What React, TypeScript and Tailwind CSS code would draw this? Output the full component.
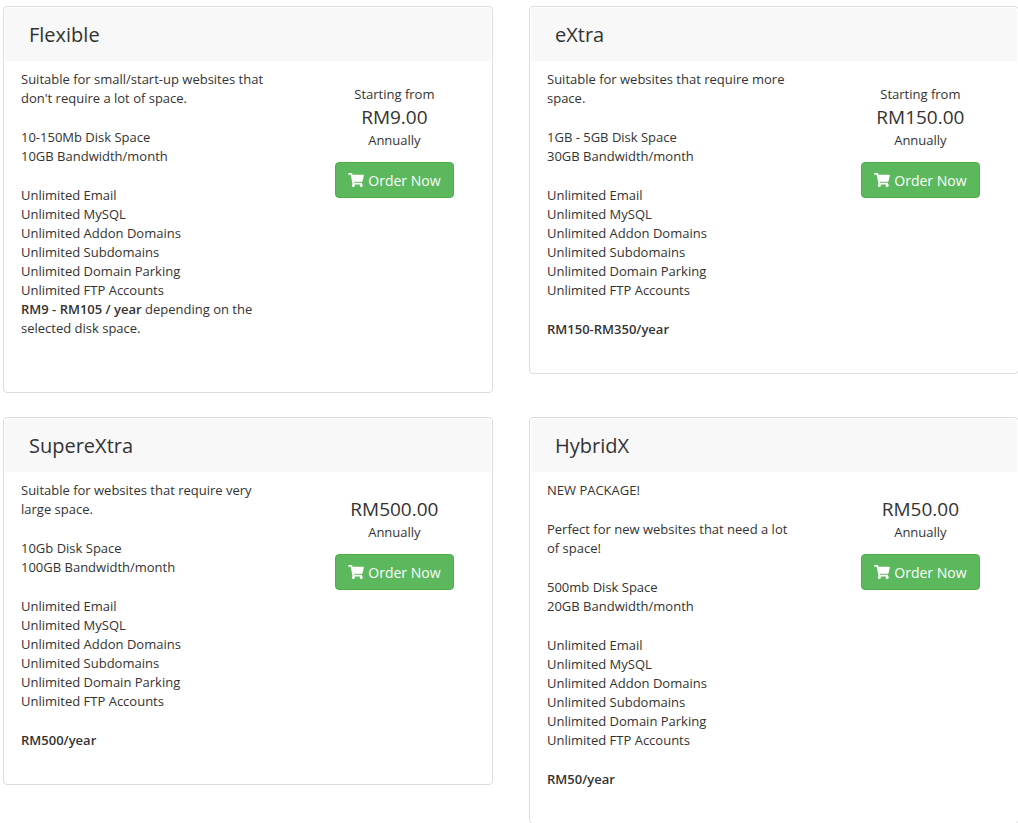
import React from "react";
import { FaShoppingCart } from "react-icons/fa";

type Plan = {
  name: string;
  startingFrom?: boolean;
  price: string;
  intro: string[];
  specs: string[];
  yearly: React.ReactNode;
  // yearly price sits right under the feature list, with an empty line after it
  tightYearly?: boolean;
};

const features = [
  "Unlimited Email",
  "Unlimited MySQL",
  "Unlimited Addon Domains",
  "Unlimited Subdomains",
  "Unlimited Domain Parking",
  "Unlimited FTP Accounts",
];

const plans: Plan[] = [
  {
    name: "Flexible",
    startingFrom: true,
    price: "RM9.00",
    intro: ["Suitable for small/start-up websites that don't require a lot of space."],
    specs: ["10-150Mb Disk Space", "10GB Bandwidth/month"],
    yearly: (
      <>
        <strong className="font-semibold">RM9 - RM105 / year</strong> depending on the selected disk space.
      </>
    ),
    tightYearly: true,
  },
  {
    name: "eXtra",
    startingFrom: true,
    price: "RM150.00",
    intro: ["Suitable for websites that require more space."],
    specs: ["1GB - 5GB Disk Space", "30GB Bandwidth/month"],
    yearly: <strong className="font-semibold">RM150-RM350/year</strong>,
  },
  {
    name: "SupereXtra",
    price: "RM500.00",
    intro: ["Suitable for websites that require very large space."],
    specs: ["10Gb Disk Space", "100GB Bandwidth/month"],
    yearly: <strong className="font-semibold">RM500/year</strong>,
  },
  {
    name: "HybridX",
    price: "RM50.00",
    intro: ["NEW PACKAGE!", "Perfect for new websites that need a lot of space!"],
    specs: ["500mb Disk Space", "20GB Bandwidth/month"],
    yearly: <strong className="font-semibold">RM50/year</strong>,
  },
];

const Lines = ({ items }: { items: string[] }) => (
  <ul className="mt-5">
    {items.map((item) => (
      <li key={item}>{item}</li>
    ))}
  </ul>
);

const PlanCard = ({ plan }: { plan: Plan }) => (
  <section className="rounded border border-[#ddd] bg-white">
    <header className="mx-px mt-px rounded-t-sm bg-[#f8f8f8] px-6 py-3">
      <h2 className="text-[20px] leading-[29px]">{plan.name}</h2>
    </header>
    <div className="flex items-start">
      <div className="w-3/5 pt-[9px] pr-6 pb-[34px] pl-[17px] leading-[19px]">
        {plan.intro.map((text, index) => (
          <p key={text} className={index > 0 ? "mt-5" : ""}>{text}</p>
        ))}
        <Lines items={plan.specs} />
        <Lines items={features} />
        <p className={plan.tightYearly ? "mb-5" : "mt-5"}>{plan.yearly}</p>
      </div>
      <div className="w-2/5 pt-6 text-center leading-[19px]">
        {plan.startingFrom && <p>Starting from</p>}
        <p className="text-[19px] leading-[27px]">{plan.price}</p>
        <p>Annually</p>
        <a
          href="#order"
          className="mt-3 inline-flex h-9 items-center gap-1 rounded border border-[#4cae4c] bg-[#5cb85c] px-3 text-[14px] font-medium text-white hover:bg-[#449d44]"
        >
          <FaShoppingCart className="h-[14px] w-4" />
          Order Now
        </a>
      </div>
    </div>
  </section>
);

export default function App() {
  return (
    <main className="overflow-x-hidden bg-white pt-[6px] pl-[3px] font-['Open_Sans',sans-serif] text-[13px] text-[#333]">
      <div className="-mr-px grid grid-cols-2 items-start gap-x-9 gap-y-6">
        {plans.map((plan) => (
          <PlanCard key={plan.name} plan={plan} />
        ))}
      </div>
    </main>
  );
}
